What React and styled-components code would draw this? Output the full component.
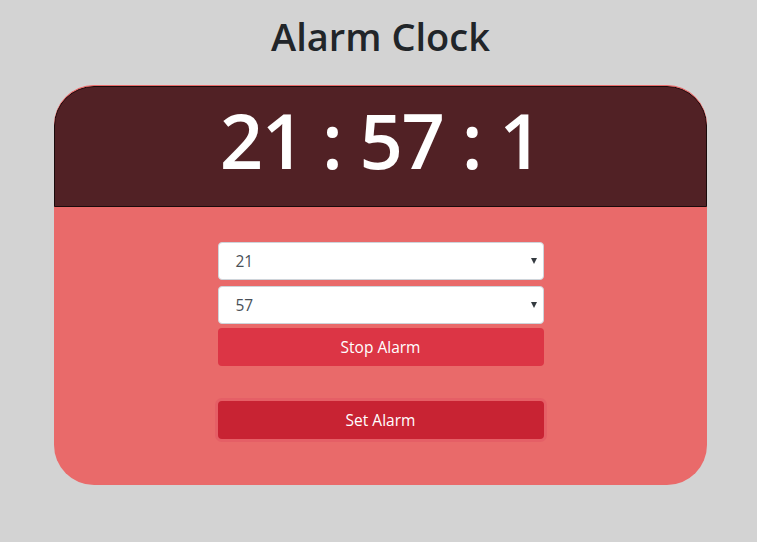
import styled, { createGlobalStyle } from "styled-components"

const Global = createGlobalStyle`
  body {
    margin: 0;
    background-color: #d3d3d3;
    font-family: "Open Sans", "Liberation Sans", sans-serif;
  }
`

const Page = styled.div`
  display: flex;
  flex-direction: column;
  align-items: center;
  padding: 14px 0 0 4px;
  height: 542px;
  box-sizing: border-box;
`

const Title = styled.h1`
  margin: 0 0 25px 0;
  font-size: 38px;
  font-weight: 600;
  color: #212529;
  line-height: 1.2;
`

const Card = styled.div`
  width: 653px;
  height: 400px;
  background-color: #e96a6a;
  border-radius: 40px;
  overflow: hidden;
  border-top: 1px solid #e96a6a;
  box-sizing: border-box;
`

const Display = styled.div`
  height: 121px;
  background-color: #512125;
  border: 1px solid #1a0a0b;
  border-radius: 40px 40px 0 0;
  box-sizing: border-box;
  display: flex;
  align-items: center;
  justify-content: center;
  color: #fff;
  font-size: 76px;
  font-weight: 600;
  letter-spacing: -1.5px;
  padding-bottom: 14px;
`

const Controls = styled.div`
  width: 326px;
  margin: 35px auto 0;
  display: flex;
  flex-direction: column;
`

const SelectBox = styled.div`
  position: relative;
  height: 38px;
  margin-bottom: 6px;
  background: #fff;
  border: 1px solid #ced4da;
  border-radius: 4px;
  box-sizing: border-box;
  display: flex;
  align-items: center;
  padding-left: 17px;
  font-size: 15.5px;
  color: #495057;
  &::after {
    content: "";
    position: absolute;
    right: 6px;
    top: 15px;
    border-left: 3.5px solid transparent;
    border-right: 3.5px solid transparent;
    border-top: 6px solid #343a40;
  }
`

const Button = styled.button`
  height: 38px;
  border: none;
  border-radius: 4px;
  color: #fff;
  font-family: inherit;
  font-size: 15.5px;
  background-color: ${p => (p.$dark ? "#c82333" : "#dc3545")};
  margin-top: ${p => p.$gap || 0}px;
  box-shadow: ${p => (p.$dark ? "0 0 0 3px rgba(225, 83, 97, 0.5)" : "none")};
`

export default function App() {
  return (
    <>
      <Global />
      <Page>
        <Title>Alarm Clock</Title>
        <Card>
          <Display>21 : 57 : 1</Display>
          <Controls>
            <SelectBox>21</SelectBox>
            <SelectBox>57</SelectBox>
            <Button $gap={-2}>Stop Alarm</Button>
            <Button $dark $gap={35}>Set Alarm</Button>
          </Controls>
        </Card>
      </Page>
    </>
  )
}
